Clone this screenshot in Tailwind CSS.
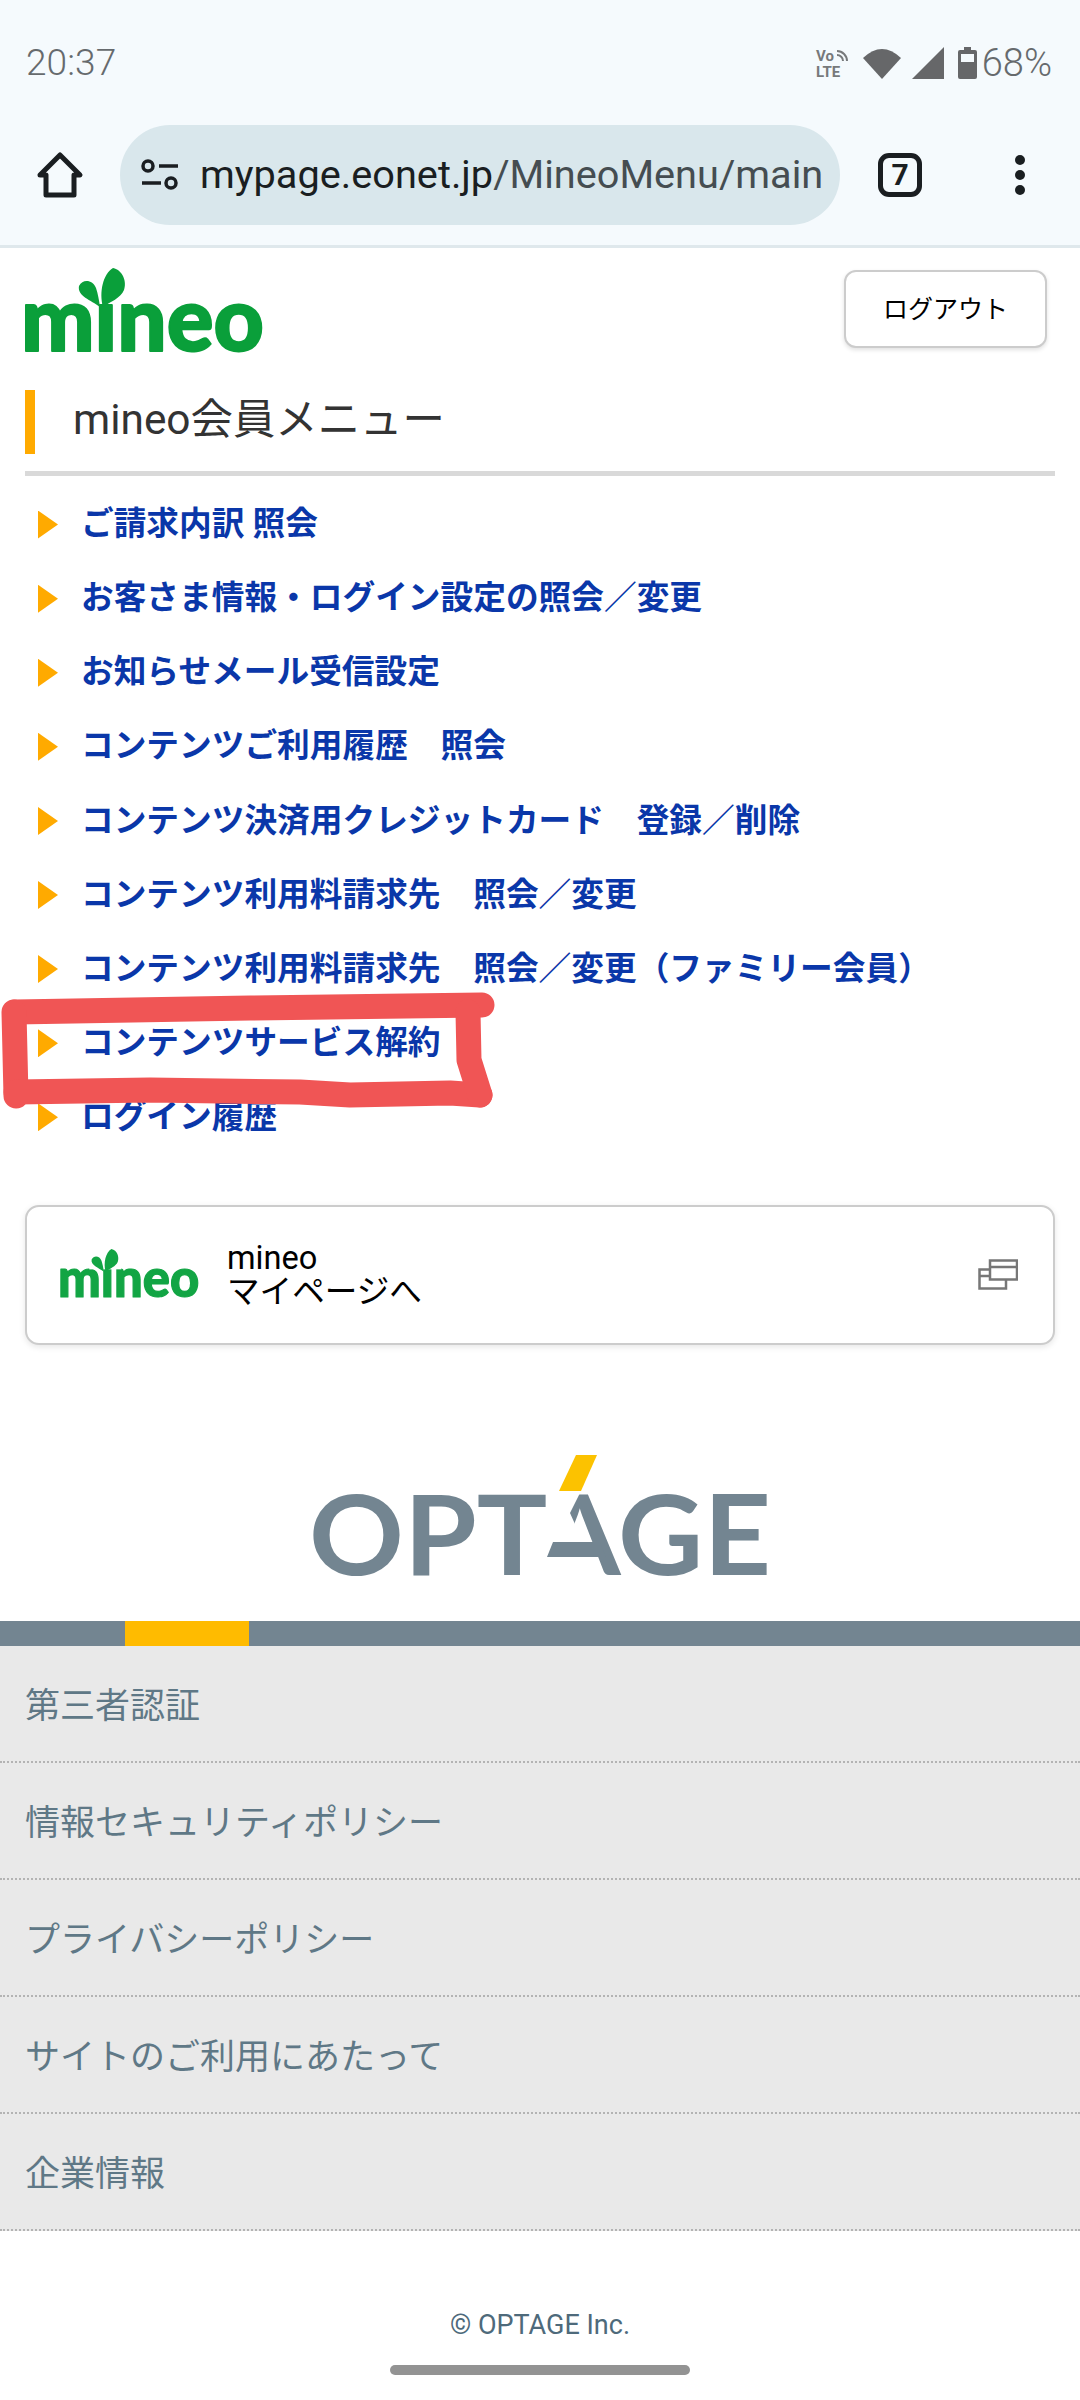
<!doctype html>
<html lang="ja">
<head>
<meta charset="utf-8">
<script src="https://cdn.jsdelivr.net/npm/@tailwindcss/browser@4"></script>
</head>
<body>
<div class="relative w-[1080px] h-[2400px] overflow-hidden bg-white flex flex-col font-[Roboto,'Noto_Sans_CJK_JP',sans-serif]">

  <!-- Browser chrome -->
  <header class="h-[248px] shrink-0 bg-[#f5fafd] border-b-[3px] border-[#dfe8ec] flex flex-col">
    <div class="h-[125px] pl-[26px] pr-[28px] flex items-center justify-between text-[#666a6d]">
      <span class="text-[37px] leading-none font-light tracking-[0.1px]">20:37</span>
      <div class="flex items-center h-[40px]">
        <svg class="w-[36px] h-[32px] overflow-visible" viewBox="0 0 36 32">
          <text x="0" y="14" font-family="Roboto" font-size="15" font-weight="700" fill="#77797b">Vo</text>
          <text x="0" y="30" font-family="Roboto" font-size="15" font-weight="700" fill="#77797b">LTE</text>
          <path d="M21 4a10 10 0 0 1 10 10M21 8a6 6 0 0 1 6 6" fill="none" stroke="#77797b" stroke-width="2"/>
        </svg>
        <svg class="w-[38px] h-[32px] ml-[11px]" viewBox="0 0 38 32"><path d="M0 11Q19-7 38 11L19 32Z" fill="#666769"/></svg>
        <svg class="w-[32px] h-[32px] ml-[11px]" viewBox="0 0 32 32"><path d="M32 0V32H0Z" fill="#666769"/></svg>
        <svg class="w-[19px] h-[32px] ml-[14px]" viewBox="0 0 19 32"><path d="M6 0H13V3H17Q19 3 19 5V30Q19 32 17 32H2Q0 32 0 30V5Q0 3 2 3H6Z" fill="#666769"/><rect x="3" y="7" width="13" height="8" fill="#f5fafd"/></svg>
        <span class="text-[38px] leading-none ml-[5px] font-light">68%</span>
      </div>
    </div>
    <div class="h-[100px] flex items-center pl-[36px]">
      <svg class="w-[48px] h-[48px]" viewBox="0 0 48 48"><path d="M24 4L44 24H38V44H10V24H4Z" fill="none" stroke="#1a1e21" stroke-width="5" stroke-linejoin="round"/></svg>
      <div class="ml-[36px] w-[720px] h-[100px] rounded-full bg-[#d9e7ec] flex items-center pl-[21px]">
        <svg class="w-[38px] h-[32px] shrink-0" viewBox="0 0 38 32" fill="none" stroke="#1a1e21" stroke-width="3.5">
          <circle cx="7" cy="7" r="5"/><path d="M18 7H37M1 24H20"/><circle cx="30" cy="24" r="5"/>
        </svg>
        <div class="ml-[21px] w-[622px] whitespace-nowrap text-[39.7px] leading-[50px] text-[#454d51]"><span class="text-[#1a1e21]">mypage.eonet.jp</span>/MineoMenu/main</div>
      </div>
      <div class="ml-[38px] w-[44px] h-[44px] rounded-[11px] border-[5px] border-[#1a1e21] flex items-center justify-center text-[30px] leading-none font-bold text-[#1a1e21]">7</div>
      <div class="ml-[93px] flex flex-col gap-[5px]">
        <span class="block w-[10px] h-[10px] rounded-full bg-[#1a1e21]"></span>
        <span class="block w-[10px] h-[10px] rounded-full bg-[#1a1e21]"></span>
        <span class="block w-[10px] h-[10px] rounded-full bg-[#1a1e21]"></span>
      </div>
    </div>
  </header>

  <!-- Page top -->
  <section class="h-[142px] shrink-0 px-[25px] pr-[33px] pt-[20px] flex justify-between items-start">
    <svg class="w-[240px] h-[86px] overflow-visible" viewBox="0 0 240 86">
      <text x="-4" y="83" textLength="243" lengthAdjust="spacingAndGlyphs" font-family="Lato,'Open Sans',sans-serif" font-size="90" font-weight="900" fill="#0a9f3a" stroke="#0a9f3a" stroke-width="2" stroke-linejoin="round">mineo</text>
      <rect x="50" y="-6" width="55" height="41" fill="#ffffff"/>
      <path d="M78 39C74 24 78 6 88 0C98 2 102 14 99 22C96 30 85 34 78 39Z" fill="#0a9f3a"/>
      <path d="M75 39C66 32 52 28 54 18C58 10 68 12 71 20C73 26 74 32 75 39Z" fill="#0a9f3a"/>
    </svg>
    <button class="mt-[2px] w-[203px] h-[78px] rounded-[12px] border-2 border-[#cccccc] bg-white shadow-[0_2px_4px_rgba(0,0,0,0.12)] text-[25px] leading-none text-black">ログアウト</button>
  </section>

  <!-- Heading -->
  <div class="mx-[25px] h-[86px] shrink-0 border-b-[5px] border-[#d9d9d9] flex items-start">
    <div class="w-[10px] h-[64px] bg-[#ffaa00]"></div>
    <h1 class="ml-[38px] mt-[-2px] h-[64px] flex items-center text-[42.4px] leading-none font-normal text-[#333333]">mineo会員メニュー</h1>
  </div>

  <!-- Menu -->
  <ul class="mt-[11.5px] pl-[38px] shrink-0 flex flex-col">
    <li class="h-[74.1px] flex items-center gap-[23px]"><span class="w-[20px] h-[28px] bg-[#ffaa00] [clip-path:polygon(0_0,100%_50%,0_100%)]"></span><a class="text-[32.7px] leading-none font-bold text-[#0a37a9]">ご請求内訳 照会</a></li>
    <li class="h-[74.1px] flex items-center gap-[23px]"><span class="w-[20px] h-[28px] bg-[#ffaa00] [clip-path:polygon(0_0,100%_50%,0_100%)]"></span><a class="text-[32.7px] leading-none font-bold text-[#0a37a9]">お客さま情報・ログイン設定の照会／変更</a></li>
    <li class="h-[74.1px] flex items-center gap-[23px]"><span class="w-[20px] h-[28px] bg-[#ffaa00] [clip-path:polygon(0_0,100%_50%,0_100%)]"></span><a class="text-[32.7px] leading-none font-bold text-[#0a37a9]">お知らせメール受信設定</a></li>
    <li class="h-[74.1px] flex items-center gap-[23px]"><span class="w-[20px] h-[28px] bg-[#ffaa00] [clip-path:polygon(0_0,100%_50%,0_100%)]"></span><a class="text-[32.7px] leading-none font-bold text-[#0a37a9]">コンテンツご利用履歴　照会</a></li>
    <li class="h-[74.1px] flex items-center gap-[23px]"><span class="w-[20px] h-[28px] bg-[#ffaa00] [clip-path:polygon(0_0,100%_50%,0_100%)]"></span><a class="text-[32.7px] leading-none font-bold text-[#0a37a9]">コンテンツ決済用クレジットカード　登録／削除</a></li>
    <li class="h-[74.1px] flex items-center gap-[23px]"><span class="w-[20px] h-[28px] bg-[#ffaa00] [clip-path:polygon(0_0,100%_50%,0_100%)]"></span><a class="text-[32.7px] leading-none font-bold text-[#0a37a9]">コンテンツ利用料請求先　照会／変更</a></li>
    <li class="h-[74.1px] flex items-center gap-[23px]"><span class="w-[20px] h-[28px] bg-[#ffaa00] [clip-path:polygon(0_0,100%_50%,0_100%)]"></span><a class="text-[32.7px] leading-none font-bold text-[#0a37a9]">コンテンツ利用料請求先　照会／変更（ファミリー会員）</a></li>
    <li class="h-[74.1px] flex items-center gap-[23px]"><span class="w-[20px] h-[28px] bg-[#ffaa00] [clip-path:polygon(0_0,100%_50%,0_100%)]"></span><a class="text-[32.7px] leading-none font-bold text-[#0a37a9]">コンテンツサービス解約</a></li>
    <li class="h-[74.1px] flex items-center gap-[23px]"><span class="w-[20px] h-[28px] bg-[#ffaa00] [clip-path:polygon(0_0,100%_50%,0_100%)]"></span><a class="text-[32.7px] leading-none font-bold text-[#0a37a9]">ログイン履歴</a></li>
  </ul>

  <!-- My page card -->
  <a class="mt-[50.5px] mx-[25px] h-[140px] shrink-0 rounded-[14px] border-2 border-[#cccccc] bg-white shadow-[0_2px_6px_rgba(0,0,0,0.1)] flex items-center pl-[33px] pr-[35px]">
    <svg class="w-[140px] h-[50px] shrink-0 mt-[-2px] overflow-visible" viewBox="0 0 240 86">
      <text x="-4" y="83" textLength="243" lengthAdjust="spacingAndGlyphs" font-family="Lato,'Open Sans',sans-serif" font-size="90" font-weight="900" fill="#12a544" stroke="#12a544" stroke-width="2" stroke-linejoin="round">mineo</text>
      <rect x="50" y="-6" width="55" height="41" fill="#ffffff"/>
      <path d="M78 39C74 24 78 6 88 0C98 2 102 14 99 22C96 30 85 34 78 39Z" fill="#12a544"/>
      <path d="M75 39C66 32 52 28 54 18C58 10 68 12 71 20C73 26 74 32 75 39Z" fill="#12a544"/>
    </svg>
    <div class="ml-[27px] flex-1 text-[32.6px] leading-[34px] text-black">mineo<br>マイページへ</div>
    <svg class="w-[40px] h-[31px] shrink-0" viewBox="0 0 40 31" fill="none" stroke="#777777" stroke-width="2.5">
      <rect x="12" y="1.5" width="27" height="19"/><path d="M12 8H39"/>
      <path d="M12 10.5H1.5V29.5H28V20.5M1.5 17H12"/>
    </svg>
  </a>

  <!-- OPTAGE logo -->
  <div class="mt-[105px] h-[171px] shrink-0 flex justify-center items-start">
    <svg class="w-[480px] h-[128px] overflow-visible" viewBox="0 0 480 128">
      <text x="9" y="125" textLength="462" lengthAdjust="spacingAndGlyphs" font-family="Lato,'Open Sans',sans-serif" font-size="112" font-weight="700" fill="#738591">OPTAGE</text>
      <path d="M249 36L281 41L270 63L283 92H285L292 107L300 128H228V62H249Z" fill="#ffffff"/>
      <path d="M253 92H300L306 107H247Z" fill="#738591"/>
      <path d="M276 5H297L281 41H259Z" fill="#fcc200"/>
    </svg>
  </div>

  <!-- Footer links -->
  <div class="h-[25px] shrink-0 bg-[#738591] pl-[125px]"><div class="w-[124px] h-[25px] bg-[#ffbb00]"></div></div>
  <ul class="shrink-0 bg-[#e9e9e9] text-[35px] leading-none text-[#5f7886]">
    <li class="h-[117px] pl-[25px] pt-[6px] flex items-center border-b-2 border-dotted border-[#b3b3b3]">第三者認証</li>
    <li class="h-[117px] pl-[25px] pt-[6px] flex items-center border-b-2 border-dotted border-[#b3b3b3]">情報セキュリティポリシー</li>
    <li class="h-[117px] pl-[25px] pt-[6px] flex items-center border-b-2 border-dotted border-[#b3b3b3]">プライバシーポリシー</li>
    <li class="h-[117px] pl-[25px] pt-[6px] flex items-center border-b-2 border-dotted border-[#b3b3b3]">サイトのご利用にあたって</li>
    <li class="h-[117px] pl-[25px] pt-[6px] flex items-center border-b-2 border-dotted border-[#b3b3b3]">企業情報</li>
  </ul>
  <p class="mt-[78px] text-center text-[27px] leading-[32px] text-[#4e6a7b]">© OPTAGE Inc.</p>

  <!-- Gesture bar -->
  <div class="absolute left-[390px] top-[2365px] w-[300px] h-[10px] rounded-full bg-[#939393]"></div>

  <!-- Hand-drawn red annotation -->
  <svg class="absolute left-0 top-[980px] w-[510px] h-[140px]" viewBox="0 980 510 140" fill="none" stroke="#f05555" stroke-width="25" stroke-linecap="round" stroke-linejoin="round">
    <path d="M15 1012L250 1008L482 1005"/>
    <path d="M14 1012L16 1096"/>
    <path d="M16 1092L150 1090L300 1092L350 1095L450 1093L480 1095"/>
    <path d="M468 1012L469 1060L480 1095"/>
  </svg>
</div>
</body>
</html>
